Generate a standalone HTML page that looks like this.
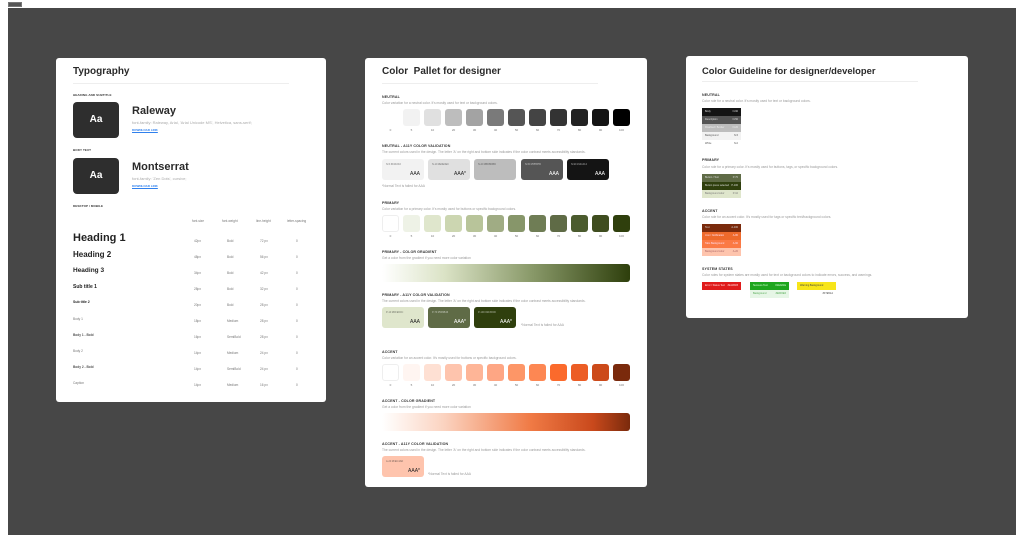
<!DOCTYPE html>
<html><head><meta charset="utf-8"><style>
*{margin:0;padding:0;box-sizing:border-box}
body{width:1024px;height:543px;background:#fff;position:relative;overflow:hidden;font-family:"Liberation Sans",sans-serif;color:#222}
.canvas{position:absolute;left:8px;top:8px;width:1008px;height:527px;background:#474747}
.tag{position:absolute;left:8px;top:2px;width:14px;height:5px;background:#555;border:1px solid #777}
.card{position:absolute;background:#fff;border-radius:3px}
.a{position:absolute;white-space:nowrap}
.t{font-weight:bold;font-size:10px;color:#2a2a2a}
.hr{position:absolute;height:1px;background:#eee}
.lb{font-size:3.6px;font-weight:bold;color:#333;letter-spacing:.1px}
.ds{font-size:3.3px;color:#999}
.sm{font-size:3.2px;color:#777}
.sw{position:absolute;width:17px;height:17px;border-radius:3px}
.n{position:absolute;font-size:3px;color:#777;width:17px;text-align:center}
.vc{position:absolute;width:42px;height:21px;border-radius:3px}
.vc span{position:absolute;right:4px;bottom:3px;font-size:5px}
.vc i{position:absolute;left:4px;top:4px;font-size:2.5px;font-style:normal;opacity:.6}
.row{position:absolute;left:16px;width:39px;height:8px;font-size:2.5px;line-height:8px;padding:0 3px}
.row b{float:right;font-weight:normal}
</style></head><body>
<div class="tag"></div>
<div class="canvas"></div>

<!-- card 1 -->
<div class="card" style="left:56px;top:58px;width:270px;height:344px">
<div class="a t" style="left:17px;top:8px">Typography</div>
<div class="hr" style="left:17px;top:25px;width:216px"></div>
<div class="a lb" style="left:17px;top:35px;font-size:3px">HEADING AND SUBTITLE</div>
<div class="a" style="left:17px;top:44px;width:46px;height:36px;background:#2e2e2e;border-radius:4px;color:#fff;font-size:10px;font-weight:bold;text-align:center;line-height:36px">Aa</div>
<div class="a" style="left:76px;top:47px;font-size:11px;font-weight:bold;color:#2a2a2a">Raleway</div>
<div class="a" style="left:76px;top:62px;font-size:4px;color:#aaa">font-family: Raleway, Arial, 'Arial Unicode MS', Helvetica, sans-serif;</div>
<div class="a" style="left:76px;top:70px;font-size:3px;color:#2f80ed;font-weight:bold;text-decoration:underline">DOWNLOAD LINK</div>
<div class="a lb" style="left:17px;top:90px;font-size:3px">BODY TEXT</div>
<div class="a" style="left:17px;top:100px;width:46px;height:36px;background:#2e2e2e;border-radius:4px;color:#fff;font-size:10px;font-weight:bold;text-align:center;line-height:36px">Aa</div>
<div class="a" style="left:76px;top:103px;font-size:11px;font-weight:bold;color:#2a2a2a">Montserrat</div>
<div class="a" style="left:76px;top:118px;font-size:4px;color:#aaa">font-family: 'Zen Dots', cursive;</div>
<div class="a" style="left:76px;top:126px;font-size:3px;color:#2f80ed;font-weight:bold;text-decoration:underline">DOWNLOAD LINK</div>
<div class="a lb" style="left:17px;top:146px;font-size:3px">DESKTOP / MOBILE</div>
<div class="a sm" style="left:136px;top:161px">font-size</div>
<div class="a sm" style="left:166px;top:161px">font-weight</div>
<div class="a sm" style="left:200px;top:161px">line-height</div>
<div class="a sm" style="left:231px;top:161px">letter-spacing</div>
<div class="a" style="left:17px;top:174px;font-size:11px;font-weight:bold">Heading 1</div>
<div class="a" style="left:17px;top:192px;font-size:8px;font-weight:bold">Heading 2</div>
<div class="a" style="left:17px;top:209px;font-size:6.5px;font-weight:bold">Heading 3</div>
<div class="a" style="left:17px;top:226px;font-size:5px;font-weight:bold">Sub title 1</div>
<div class="a" style="left:17px;top:242px;font-size:3.5px;font-weight:bold">Sub title 2</div>
<div class="a sm" style="left:17px;top:259px">Body 1</div>
<div class="a sm" style="left:17px;top:275px;font-weight:bold;color:#555">Body 1 - Bold</div>
<div class="a sm" style="left:17px;top:291px">Body 2</div>
<div class="a sm" style="left:17px;top:307px;font-weight:bold;color:#555">Body 2 - Bold</div>
<div class="a sm" style="left:17px;top:323px">Caption</div>
<div class="a sm" style="left:138px;top:175px;line-height:16px">42px<br>48px<br>34px<br>28px<br>20px<br>18px<br>16px<br>14px<br>14px<br>14px</div>
<div class="a sm" style="left:171px;top:175px;line-height:16px">Bold<br>Bold<br>Bold<br>Bold<br>Bold<br>Medium<br>SemiBold<br>Medium<br>SemiBold<br>Medium</div>
<div class="a sm" style="left:204px;top:175px;line-height:16px">72 px<br>56 px<br>42 px<br>32 px<br>28 px<br>28 px<br>28 px<br>24 px<br>24 px<br>16 px</div>
<div class="a sm" style="left:240px;top:175px;line-height:16px">0<br>0<br>0<br>0<br>0<br>0<br>0<br>0<br>0<br>0</div>
</div>

<!-- card 2 -->
<div class="card" style="left:365px;top:58px;width:282px;height:429px">
<div class="a t" style="left:17px;top:8px">Color&nbsp; Pallet for designer</div>
<div class="hr" style="left:17px;top:25px;width:216px"></div>
<div class="a lb" style="left:17px;top:37px">NEUTRAL</div>
<div class="a ds" style="left:17px;top:43px">Color variation for a neutral color. It's mostly used for text or background colors.</div>
<div class="a lb" style="left:17px;top:86px">NEUTRAL - A11Y COLOR VALIDATION</div>
<div class="a ds" style="left:17px;top:92px">The current colors used in the design. The letter 'A' on the right and bottom side indicates if the color contrast meets accessibility standards.</div>
<div class="vc" style="left:17px;top:101px;background:#f2f2f2"><i>N-5 #F2F2F2</i><span>AAA</span></div>
<div class="vc" style="left:63px;top:101px;background:#e0e0e0"><i>N-10 #E0E0E0</i><span>AAA*</span></div>
<div class="vc" style="left:109px;top:101px;background:#bdbdbd"><i>N-20 #BDBDBD</i></div>
<div class="vc" style="left:156px;top:101px;background:#555;color:#fff"><i>N-50 #555555</i><span>AAA</span></div>
<div class="vc" style="left:202px;top:101px;background:#141414;color:#fff"><i>N-90 #141414</i><span>AAA</span></div>
<div class="a ds" style="left:17px;top:126px">*Normal Text is failed for AAA</div>
<div class="a lb" style="left:17px;top:143px">PRIMARY</div>
<div class="a ds" style="left:17px;top:149px">Color variation for a primary color. It's mostly used for buttons or specific background colors.</div>
<div class="a lb" style="left:17px;top:192px">PRIMARY - COLOR GRADIENT</div>
<div class="a ds" style="left:17px;top:198px">Get a color from the gradient if you need more color variation</div>
<div class="a" style="left:17px;top:206px;width:248px;height:18px;border-radius:3px;background:linear-gradient(90deg,#fff,#dbe3c6 25%,#8a9a6a 60%,#2e3f0c)"></div>
<div class="a lb" style="left:17px;top:235px">PRIMARY - A11Y COLOR VALIDATION</div>
<div class="a ds" style="left:17px;top:241px">The current colors used in the design. The letter 'A' on the right and bottom side indicates if the color contrast meets accessibility standards.</div>
<div class="vc" style="left:17px;top:249px;background:#dfe6cc"><i>P-10 #DFE6CC</i><span>AAA</span></div>
<div class="vc" style="left:63px;top:249px;background:#5f6b46;color:#fff"><i>P-70 #5F6B46</i><span>AAA*</span></div>
<div class="vc" style="left:109px;top:249px;background:#2f3f0d;color:#fff"><i>P-100 #2F3F0D</i><span>AAA*</span></div>
<div class="a ds" style="left:156px;top:265px">*Normal Text is failed for AAA</div>
<div class="a lb" style="left:17px;top:292px">ACCENT</div>
<div class="a ds" style="left:17px;top:298px">Color variation for an accent color. It's mostly used for buttons or specific background colors.</div>
<div class="a lb" style="left:17px;top:341px">ACCENT - COLOR GRADIENT</div>
<div class="a ds" style="left:17px;top:347px">Get a color from the gradient if you need more color variation</div>
<div class="a" style="left:17px;top:355px;width:248px;height:18px;border-radius:3px;background:linear-gradient(90deg,#fff,#fbd3c0 25%,#f07a45 60%,#c9491c 85%,#7a2a0c)"></div>
<div class="a lb" style="left:17px;top:384px">ACCENT - A11Y COLOR VALIDATION</div>
<div class="a ds" style="left:17px;top:390px">The current colors used in the design. The letter 'A' on the right and bottom side indicates if the color contrast meets accessibility standards.</div>
<div class="vc" style="left:17px;top:398px;background:#fec4ad"><i>A-20 #FEC4AD</i><span>AAA*</span></div>
<div class="a ds" style="left:63px;top:414px">*Normal Text is failed for AAA</div>
<div id="sw"></div>
</div>

<!-- card 3 -->
<div class="card" style="left:686px;top:56px;width:282px;height:262px">
<div class="a t" style="left:16px;top:9px;font-size:9.4px">Color Guideline for designer/developer</div>
<div class="hr" style="left:16px;top:25px;width:216px"></div>
<div class="a lb" style="left:16px;top:37px">NEUTRAL</div>
<div class="a ds" style="left:16px;top:43px">Color rule for a neutral color. It's mostly used for text or background colors.</div>
<div class="row" style="top:52px;background:#141414;color:#ddd">Body<b>N-90</b></div>
<div class="row" style="top:60px;background:#555;color:#ddd">Description<b>N-50</b></div>
<div class="row" style="top:68px;background:#bdbdbd;color:#eee">Disabled / Border<b>N-20</b></div>
<div class="row" style="top:76px;background:#f2f2f2;color:#555">Background<b>N-5</b></div>
<div class="row" style="top:84px;background:#fff;color:#555">White<b>N-0</b></div>
<div class="a lb" style="left:16px;top:102px">PRIMARY</div>
<div class="a ds" style="left:16px;top:109px">Color rule for a primary color. It's mostly used for buttons, tags, or specific background colors.</div>
<div class="row" style="top:118px;background:#5f6b46;color:#ddd">Button / Text<b>P-70</b></div>
<div class="row" style="top:126px;background:#2f3f0d;color:#ddd">Button press selected<b>P-100</b></div>
<div class="row" style="top:134px;background:#dfe6cc;color:#777">Background color<b>P-10</b></div>
<div class="a lb" style="left:16px;top:153px">ACCENT</div>
<div class="a ds" style="left:16px;top:159px">Color rule for an accent color. It's mostly used for tags or specific text/background colors.</div>
<div class="row" style="top:168px;background:#7a2a0c;color:#ddd">Text<b>A-100</b></div>
<div class="row" style="top:176px;background:#ee6a2c;color:#fde">Icon / Notification<b>A-80</b></div>
<div class="row" style="top:184px;background:#fb7a45;color:#fde">Tabs Background<b>A-60</b></div>
<div class="row" style="top:192px;background:#fec4ad;color:#a66">Background color<b>A-20</b></div>
<div class="a lb" style="left:16px;top:211px">SYSTEM STATES</div>
<div class="a ds" style="left:16px;top:217px">Color rules for system states are mostly used for text or background colors to indicate errors, success, and warnings.</div>
<div class="row" style="top:226px;background:#e01b1b;color:#fdd">Error / Status Text<b>#E11B1B</b></div>
<div class="row" style="left:64px;top:226px;background:#1ea61e;color:#dfd">Success Text<b>#1EA61E</b></div>
<div class="row" style="left:64px;top:234px;background:#e6f6e6;color:#5a5">Background<b>#E6F6E6</b></div>
<div class="row" style="left:111px;top:226px;background:#f7e51a;color:#444">Warning Background<b>#F7E51A</b></div>
</div>

<script>
var N=['#fff','#f2f2f2','#e0e0e0','#bdbdbd','#a3a3a3','#7a7a7a','#555','#444','#333','#222','#141414','#000'];
var P=['#fff','#eef2e6','#dfe6cc','#ccd6b1','#b8c49a','#a0ac84','#87966a','#6f7d55','#5f6b46','#4b5b2e','#3f4d1f','#2f3f0d'];
var A=['#fff','#fff5f1','#fee0d3','#fec4ad','#feb597','#fea684','#fd9667','#fd8753','#fb6a2c','#ec5d25','#cc4a1a','#7a2a0c'];
var L=['0','5','10','20','30','40','50','60','70','80','90','100'];
var h='';
function rows(c,y,ly,b){for(var i=0;i<12;i++){var x=17+i*21;h+='<div class="sw" style="left:'+x+'px;top:'+y+'px;background:'+c[i]+';'+(i==0&&b?'border:1px solid #eee':'')+'"></div><div class="n" style="left:'+x+'px;top:'+ly+'px">'+L[i]+'</div>';}}
rows(N,51,70,false);rows(P,157,176,true);rows(A,306,325,true);
document.getElementById('sw').outerHTML=h;
</script>
</body></html>
